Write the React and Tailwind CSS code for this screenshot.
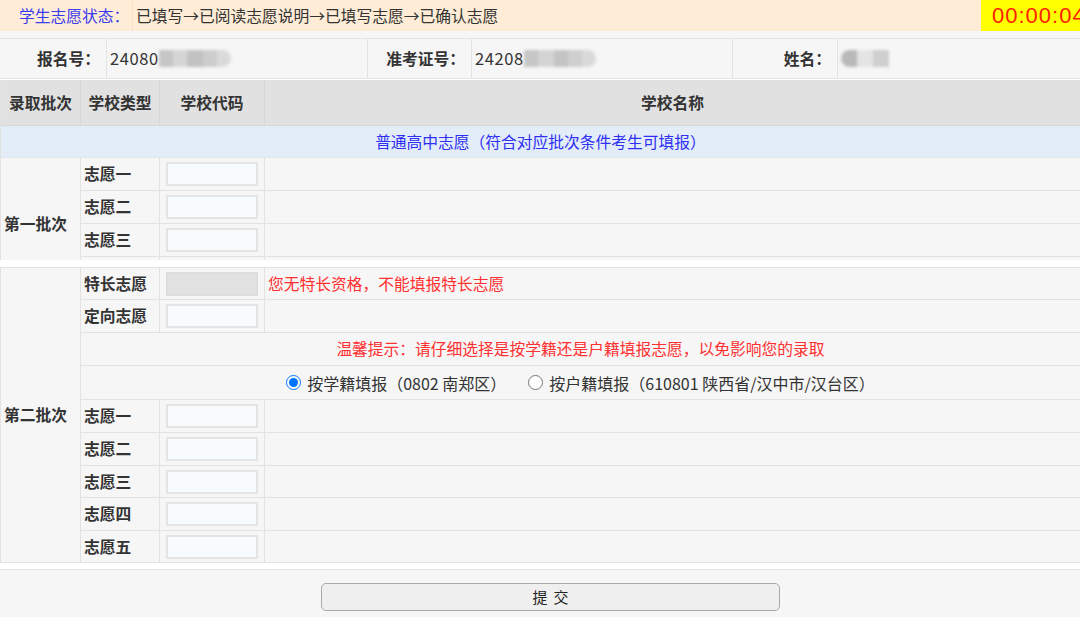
import React from "react";

function CodeInput({ disabled }) {
  return (
    <input
      disabled={disabled}
      className={
        disabled
          ? "w-[92px] h-[24px] border-2 border-[#dedede] bg-[#e2e2e2] outline-none"
          : "w-[92px] h-[24px] border-2 border-[#e4e4e4] bg-[#f8fbfe] outline-none"
      }
    />
  );
}

function Blur({ tones }) {
  return (
    <div className="flex h-[17px] blur-[1.5px]">
      {tones.map((t, i) => (
        <div key={i} className={t} />
      ))}
    </div>
  );
}

function ChoiceRow({ label, h = "h-[33px]", disabled, note }) {
  return (
    <div className={`flex ${h} border-b border-[#e2e2e2]`}>
      <div className="w-[79px] flex-none border-r border-[#e2e2e2] flex items-center pl-[3px] font-bold text-[#333] whitespace-nowrap">
        {label}
      </div>
      <div className="w-[105px] flex-none border-r border-[#e2e2e2] flex items-center pl-[6px]">
        <CodeInput disabled={disabled} />
      </div>
      <div className="flex-1 flex items-center pl-[3px] text-[#ff3030] whitespace-nowrap">{note}</div>
    </div>
  );
}

export default function App() {
  return (
    <div className="w-[1080px] h-[617px] overflow-hidden bg-white font-['Noto_Sans_CJK_SC','Noto_Sans',sans-serif] text-[#333]">
      {/* status bar */}
      <div className="flex h-[31px] bg-[#feecd6] text-[15.75px] whitespace-nowrap">
        <div className="w-[133px] flex-none border-r border-[#f8e2c6] flex items-center pl-[19px] text-[#3a3af0]">
          学生志愿状态：
        </div>
        <div className="w-[848px] flex-none flex items-center pl-[3px] text-[#333]">
          已填写→已阅读志愿说明→已填写志愿→已确认志愿
        </div>
        <div className="w-[120px] flex-none bg-[#ffff00] flex items-center pl-[11px] text-[22px] tracking-[1px] text-[#ff2000] font-['Liberation_Sans',sans-serif]">
          00:00:04
        </div>
      </div>

      {/* candidate info */}
      <div className="bg-[#f6f6f6] pt-[7px]">
        <div className="flex h-[41px] border-y border-[#e3e3e3] bg-[#f6f6f6] text-[15.75px]">
          <div className="w-[107px] flex-none border-r border-[#e3e3e3] flex items-center justify-end pr-[6px] font-bold">报名号：</div>
          <div className="w-[261px] flex-none border-r border-[#e3e3e3] flex items-center pl-[3px]">
            <span className="text-[16.5px] tracking-[0.6px]">24080</span>
            <Blur tones={["w-[14px] bg-[#c6c6c6]", "w-[14px] bg-[#d6d6d6]", "w-[16px] bg-[#c2c2c2]", "w-[14px] bg-[#cdcdcd]", "w-[14px] bg-[#dadada] rounded-r-full"]} />
          </div>
          <div className="w-[104px] flex-none border-r border-[#e3e3e3] flex items-center justify-end pr-[6px] font-bold">准考证号：</div>
          <div className="w-[261px] flex-none border-r border-[#e3e3e3] flex items-center pl-[3px]">
            <span className="text-[16.5px] tracking-[0.6px]">24208</span>
            <Blur tones={["w-[14px] bg-[#c6c6c6]", "w-[16px] bg-[#d4d4d4]", "w-[14px] bg-[#c4c4c4]", "w-[14px] bg-[#cfcfcf]", "w-[14px] bg-[#dadada] rounded-r-full"]} />
          </div>
          <div className="w-[105px] flex-none border-r border-[#e3e3e3] flex items-center justify-end pr-[6px] font-bold">姓名：</div>
          <div className="flex-1 flex items-center pl-[3px]">
            <Blur tones={["w-[16px] bg-[#b9b9b9] rounded-l-full", "w-[16px] bg-[#e4e4e4]", "w-[16px] bg-[#cfcfcf]"]} />
          </div>
        </div>
      </div>

      <div className="h-[1px] bg-white" />

      {/* first table */}
      <div className="border-l border-[#e2e2e2] text-[15.75px]">
        <div className="flex h-[46px] bg-[#e1e1e1] border-b border-[#d8d8d8] font-bold whitespace-nowrap">
          <div className="w-[80px] flex-none border-r border-[#d8d8d8] flex items-center justify-center">录取批次</div>
          <div className="w-[79px] flex-none border-r border-[#d8d8d8] flex items-center justify-center">学校类型</div>
          <div className="w-[105px] flex-none border-r border-[#d8d8d8] flex items-center justify-center">学校代码</div>
          <div className="flex-1 flex items-center justify-center">学校名称</div>
        </div>
        <div className="flex h-[32px] bg-[#e3edf8] border-b border-[#dfe6ee] items-center justify-center text-[#2f2ff5]">
          普通高中志愿（符合对应批次条件考生可填报）
        </div>
        <div className="flex h-[102px] overflow-hidden bg-[#f6f6f6]">
          <div className="w-[80px] h-[132px] flex-none border-r border-[#e2e2e2] flex items-center pl-[3px] font-bold whitespace-nowrap">第一批次</div>
          <div className="flex-1">
            <ChoiceRow label="志愿一" />
            <ChoiceRow label="志愿二" />
            <ChoiceRow label="志愿三" />
            <ChoiceRow label="志愿四" />
          </div>
        </div>
      </div>

      <div className="h-[7px] bg-white" />

      {/* second table */}
      <div className="border-l border-t border-[#e2e2e2] bg-[#f6f6f6] text-[15.75px]">
        <div className="flex">
          <div className="w-[80px] flex-none border-r border-b border-[#e2e2e2] flex items-center pl-[3px] font-bold whitespace-nowrap">第二批次</div>
          <div className="flex-1">
            <ChoiceRow label="特长志愿" h="h-[32px]" disabled note="您无特长资格，不能填报特长志愿" />
            <ChoiceRow label="定向志愿" />
            <div className="flex h-[33px] border-b border-[#e2e2e2] items-center justify-center text-[#ff3030]">
              温馨提示：请仔细选择是按学籍还是户籍填报志愿，以免影响您的录取
            </div>
            <div className="flex h-[34px] border-b border-[#e2e2e2] items-center justify-center text-[16px]">
              <label className="flex items-center gap-[6px]">
                <input type="radio" name="area" defaultChecked className="w-[15px] h-[15px] m-0" />
                <span>按学籍填报（0802 南郑区）</span>
              </label>
              <label className="flex items-center gap-[6px] ml-[22px]">
                <input type="radio" name="area" className="w-[15px] h-[15px] m-0" />
                <span>按户籍填报（610801 陕西省/汉中市/汉台区）</span>
              </label>
            </div>
            <ChoiceRow label="志愿一" />
            <ChoiceRow label="志愿二" />
            <ChoiceRow label="志愿三" h="h-[32px]" />
            <ChoiceRow label="志愿四" />
            <ChoiceRow label="志愿五" h="h-[32px]" />
          </div>
        </div>
      </div>

      <div className="h-[6px] bg-white" />

      {/* submit */}
      <div className="h-[60px] bg-[#f6f6f6] border-t border-[#e2e2e2] flex pl-[321px] pt-[13px]">
        <button className="w-[459px] h-[28px] rounded-[5px] border border-[#a9a9a9] bg-[#efefef] text-[15px] text-[#222] tracking-[6px] pl-[6px]">
          提交
        </button>
      </div>
    </div>
  );
}
